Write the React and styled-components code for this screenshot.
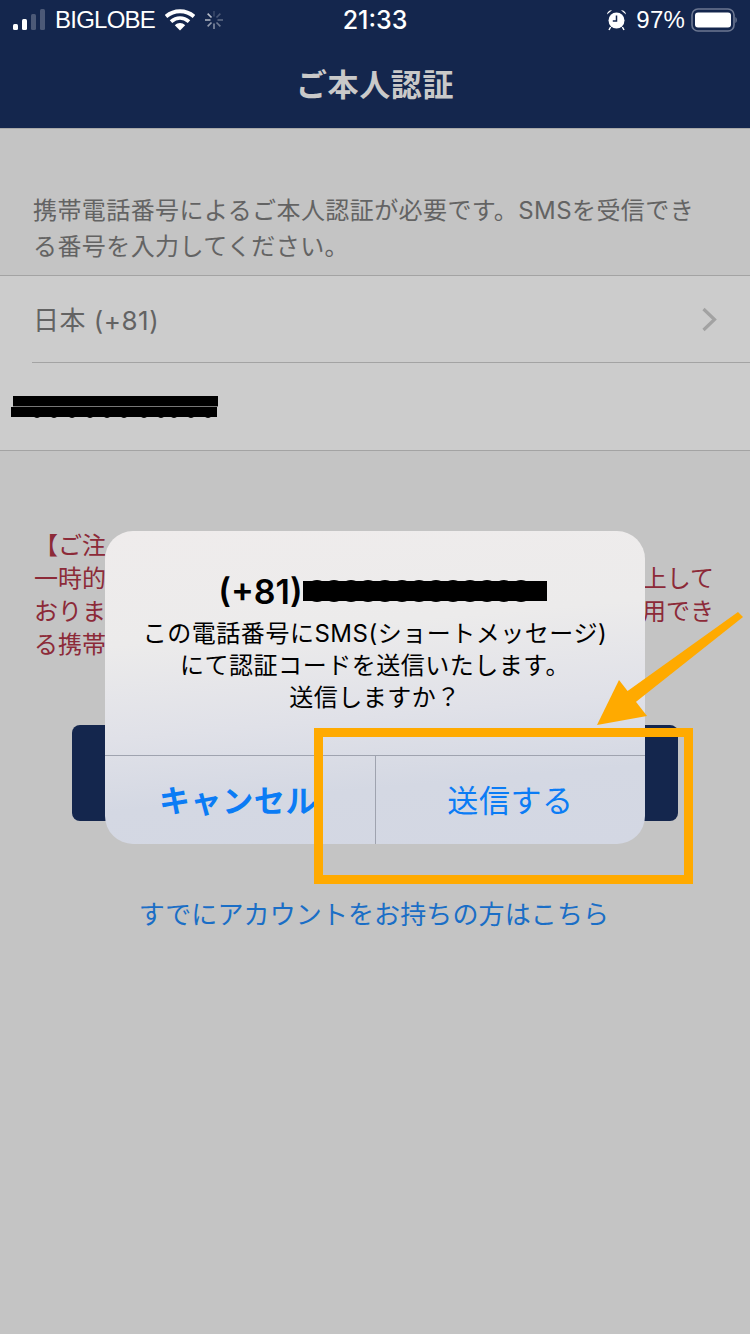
import React from 'react';
import styled, { createGlobalStyle } from 'styled-components';

const sans = `Inter, "Liberation Sans", "Noto Sans CJK JP", sans-serif`;
const jp = `"Noto Sans CJK JP", Inter, sans-serif`;

const GlobalStyle = createGlobalStyle`
    html, body {
        margin: 0;
        padding: 0;
        background: #c4c4c4;
    }
`;

const Page = styled.div`
    position: relative;
    width: 750px;
    height: 1334px;
    overflow: hidden;
    background: #c4c4c4;
    font-family: ${jp};
`;

// Status bar
const StatusBar = styled.div`
    display: grid;
    grid-template-columns: 1fr auto 1fr;
    align-items: center;
    height: 40px;
    padding: 0 13px;
    background: #14264d;
    color: #fff;
    font-family: "Liberation Sans", sans-serif;
    font-size: 24px;
`;

const StatusLeft = styled.div`
    display: flex;
    align-items: center;
`;

const StatusRight = styled.div`
    display: flex;
    align-items: center;
    justify-content: flex-end;
`;

const Carrier = styled.span`
    margin: 0 10px 0 9px;
    letter-spacing: -0.75px;
`;

const Clock = styled.span`
    font-family: ${sans};
    font-weight: 500;
    font-size: 25px;
`;

const Battery = styled.span`
    margin: 0 5px 0 9px;
    letter-spacing: 0.2px;
`;

const StatusIcon = styled.svg`
    display: block;
    flex: none;
    margin-left: ${(p) => p.$gap || 0}px;
`;

// Navigation bar
const NavBar = styled.div`
    display: flex;
    align-items: center;
    justify-content: center;
    box-sizing: border-box;
    height: 89px;
    padding-bottom: 4px;
    background: #14264d;
    border-bottom: 1px solid #a9a9a9;
    color: #c9c9c9;
    font-size: 31px;
    font-weight: 700;
    letter-spacing: 0.6px;
`;

const Intro = styled.p`
    margin: 0;
    padding: 64px 33px 10px;
    color: #636363;
    font-family: ${sans};
    font-size: 24px;
    line-height: 36px;
    letter-spacing: 0.42px;
`;

// Country + phone list
const List = styled.div`
    background: #cccccc;
    border-top: 1px solid #a3a3a3;
    border-bottom: 1px solid #a3a3a3;
`;

const Row = styled.div`
    display: flex;
    align-items: center;
    justify-content: space-between;
    height: ${(p) => p.$height}px;
    padding-left: ${(p) => p.$left}px;
    padding-right: 33px;
    color: #636363;
    font-size: 26px;
`;

const CountryLabel = styled.span`
    font-family: ${sans};
    position: relative;
    top: -1px;
    letter-spacing: 0.5px;
`;

const RowDivider = styled.div`
    height: 1px;
    margin-left: 32px;
    background: #a3a3a3;
`;

// Notice
const Notice = styled.div`
    margin-top: 76px;
    padding: 0 36px 0 34px;
    color: #8c2a38;
    font-size: 24px;
    line-height: 33px;
`;

const NoticeLine = styled.div`
    display: flex;
    justify-content: space-between;
`;

const SubmitBar = styled.div`
    height: 96px;
    margin: 66px 72px 0;
    border-radius: 8px;
    background: #14264d;
`;

const AccountLink = styled.a`
    display: block;
    margin-top: 74px;
    padding-right: 2px;
    color: #1a6ec6;
    font-size: 26px;
    line-height: 36px;
    letter-spacing: 0.12px;
    text-align: center;
`;

// Alert dialog, over the page
const Dialog = styled.div`
    position: absolute;
    left: 105px;
    top: 531px;
    width: 540px;
    height: 313px;
    display: flex;
    flex-direction: column;
    border-radius: 28px;
    overflow: hidden;
    background: linear-gradient(175deg, #efecec 0%, #ecebeb 32%, #e0e1e8 58%, #d4d8e3 78%, #d3d7e3 100%);
`;

const DialogBody = styled.div`
    flex: 1;
    padding-top: 40px;
    color: #000;
    text-align: center;
`;

const DialogTitle = styled.div`
    display: flex;
    align-items: center;
    justify-content: center;
    height: 40px;
    padding-left: 16px;
    margin-bottom: 7px;
    font-family: ${sans};
    font-size: 34px;
    font-weight: 600;
`;

const DialogMessage = styled.div`
    font-family: ${sans};
    font-size: 24px;
    line-height: 32px;
    letter-spacing: 0.52px;
    color: #000;
`;

const DialogButtons = styled.div`
    display: grid;
    grid-template-columns: 270px 1fr;
    height: 88px;
    border-top: 1px solid #9fa3af;
    flex: none;
`;

const DialogButton = styled.div`
    display: flex;
    align-items: center;
    justify-content: center;
    color: #0b7cf5;
    font-size: 31px;
    font-weight: ${(p) => (p.$bold ? 700 : 400)};
    letter-spacing: 0.6px;
    padding-bottom: 4px;
    padding-right: ${(p) => (p.$bold ? 4 : 0)}px;
    border-left: ${(p) => (p.$divided ? '1px solid #9fa3af' : 'none')};
`;

// Orange annotation
const Annotation = styled.svg`
    position: absolute;
    left: 0;
    top: 0;
    pointer-events: none;
`;

const SignalIcon = () => (
    <StatusIcon width="33" height="22" viewBox="0 0 33 22">
        <rect x="0" y="15" width="5" height="6" rx="1.5" fill="#fff" />
        <rect x="9" y="10" width="5" height="11" rx="1.5" fill="#fff" />
        <rect x="18" y="5" width="5" height="16" rx="1.5" fill="#4c5977" />
        <rect x="27" y="0" width="5" height="21" rx="1.5" fill="#4c5977" />
    </StatusIcon>
);

const WifiIcon = () => (
    <StatusIcon width="30" height="22" viewBox="0 0 30 22">
        <path d="M1 7.5C9 0.5 21 0.5 29 7.5" fill="none" stroke="#fff" strokeWidth="3.8" />
        <path d="M6 12.6C11.5 8 18.5 8 24 12.6" fill="none" stroke="#fff" strokeWidth="3.8" />
        <path d="M9.8 16.2C13 13.4 17 13.4 20.2 16.2L15 21.6Z" fill="#fff" />
    </StatusIcon>
);

const SpinnerIcon = () => (
    <StatusIcon $gap={9} width="20" height="20" viewBox="0 0 20 20">
        {[0, 45, 90, 135, 180, 225, 270, 315].map((a, i) => (
            <line
                key={a}
                x1="10"
                y1="1"
                x2="10"
                y2="6.5"
                stroke="#fff"
                strokeWidth="1.6"
                opacity={0.15 + i * 0.08}
                transform={`rotate(${a} 10 10)`}
            />
        ))}
    </StatusIcon>
);

const AlarmIcon = () => (
    <StatusIcon width="21" height="22" viewBox="0 0 21 22">
        <circle cx="10.5" cy="11.5" r="8" fill="#fff" />
        <path d="M10.5 6.5V12H6.8" fill="none" stroke="#14264d" strokeWidth="1.5" />
        <path d="M1 5.6C1.2 2.8 3.4 1 6 1.2Z M20 5.6C19.8 2.8 17.6 1 15 1.2Z" fill="#fff" />
        <path d="M4.6 18L3 21 M16.4 18L18 21" stroke="#fff" strokeWidth="1.5" />
    </StatusIcon>
);

const BatteryIcon = () => (
    <StatusIcon width="47" height="24" viewBox="0 0 47 24">
        <rect x="2" y="1" width="42" height="22" rx="6" fill="none" stroke="#6c7791" strokeWidth="1.6" />
        <rect x="5" y="4.5" width="36" height="15" rx="3" fill="#fff" />
        <path d="M45.4 9C46.4 9.5 46.8 10.6 46.8 12C46.8 13.4 46.4 14.5 45.4 15Z" fill="#6c7791" />
    </StatusIcon>
);

// Hand drawn marker over the phone numbers
const ListScribble = () => (
    <svg width="208" height="26" viewBox="0 0 208 26" style={{ display: 'block' }}>
        <rect x="2" y="2" width="205" height="10" fill="#000" />
        <rect x="2" y="12" width="205" height="1" fill="#777" />
        <rect x="0" y="13" width="206" height="10" fill="#000" />
        {[26, 43, 61, 79, 96, 113, 133, 150, 163, 180, 197].map((x) => (
            <circle key={x} cx={x} cy="19" r="5" fill="#000" />
        ))}
    </svg>
);

const TitleScribble = () => (
    <svg width="245" height="30" viewBox="0 0 245 30" style={{ display: 'block', flex: 'none' }}>
        <rect x="0" y="5" width="244" height="20" fill="#000" />
        {[14, 31, 48, 65, 82, 99, 116, 133, 150, 167, 184, 201, 218].map((x) => (
            <circle key={x} cx={x} cy="15" r="11" fill="#000" />
        ))}
    </svg>
);

const Chevron = () => (
    <svg width="16" height="25" viewBox="0 0 16 25">
        <path d="M2.5 2L13.5 12.5L2.5 23" fill="none" stroke="#a2a2a2" strokeWidth="3.2" />
    </svg>
);

function App() {
    return (
        <Page>
            <GlobalStyle />
            <StatusBar>
                <StatusLeft>
                    <SignalIcon />
                    <Carrier>BIGLOBE</Carrier>
                    <WifiIcon />
                    <SpinnerIcon />
                </StatusLeft>
                <Clock>21:33</Clock>
                <StatusRight>
                    <AlarmIcon />
                    <Battery>97%</Battery>
                    <BatteryIcon />
                </StatusRight>
            </StatusBar>
            <NavBar>ご本人認証</NavBar>
            <Intro>
                携帯電話番号によるご本人認証が必要です。SMSを受信でき
                <br />
                る番号を入力してください。
            </Intro>
            <List>
                <Row $left={33} $height={86}>
                    <CountryLabel>日本 (+81)</CountryLabel>
                    <Chevron />
                </Row>
                <RowDivider />
                <Row $left={11} $height={87}>
                    <ListScribble />
                </Row>
            </List>
            <Notice>
                <NoticeLine>【ご注</NoticeLine>
                <NoticeLine>
                    <span>一時的</span>
                    <span>上して</span>
                </NoticeLine>
                <NoticeLine>
                    <span>おりま</span>
                    <span>用でき</span>
                </NoticeLine>
                <NoticeLine>る携帯</NoticeLine>
            </Notice>
            <SubmitBar />
            <AccountLink>すでにアカウントをお持ちの方はこちら</AccountLink>

            <Dialog>
                <DialogBody>
                    <DialogTitle>
                        (+81)
                        <TitleScribble />
                    </DialogTitle>
                    <DialogMessage>
                        この電話番号にSMS(ショートメッセージ)
                        <br />
                        にて認証コードを送信いたします。
                        <br />
                        送信しますか？
                    </DialogMessage>
                </DialogBody>
                <DialogButtons>
                    <DialogButton $bold>キャンセル</DialogButton>
                    <DialogButton $divided>送信する</DialogButton>
                </DialogButtons>
            </Dialog>

            <Annotation width="750" height="1334" viewBox="0 0 750 1334">
                <rect x="318.5" y="732.5" width="370" height="147" fill="none" stroke="#ffaa00" strokeWidth="9" />
                <path d="M738 612L743 617L632 705L622 695Z" fill="#ffaa00" />
                <path d="M597 725L619 680L647 716Z" fill="#ffaa00" />
            </Annotation>
        </Page>
    );
}

export default App;
